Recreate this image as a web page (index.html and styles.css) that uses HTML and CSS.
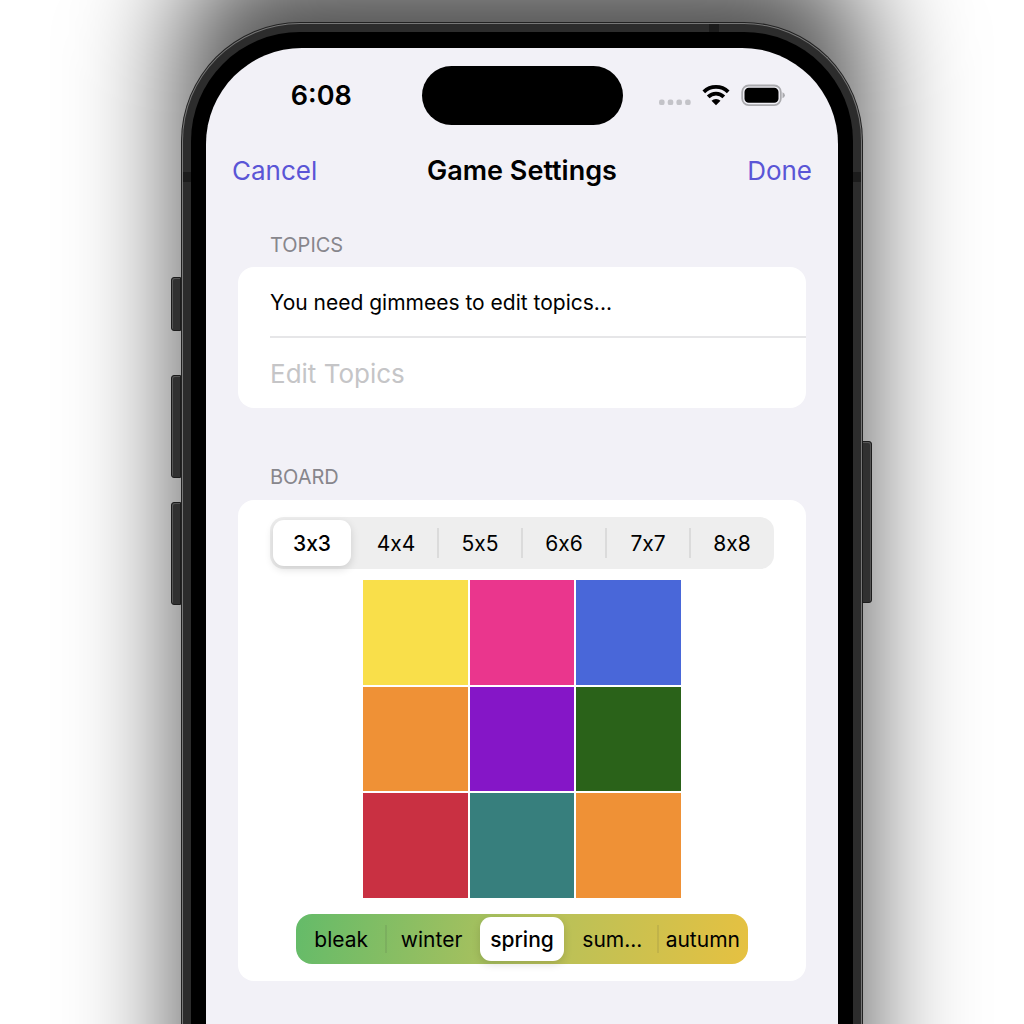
FILE: index.html
```html
<!DOCTYPE html>
<html lang="en">
<head>
<meta charset="utf-8">
<meta name="viewport" content="width=device-width, initial-scale=1">
<title>Game Settings</title>
<link rel="stylesheet" href="styles.css">
</head>
<body>
<div class="stage">
  <div class="phone">
    <span class="side-key key-action"></span>
    <span class="side-key key-up"></span>
    <span class="side-key key-down"></span>
    <span class="side-key key-power"></span>
    <div class="band">
      <span class="antenna antenna-top"></span>
      <span class="antenna antenna-left"></span>
      <span class="antenna antenna-right"></span>
      <div class="bezel">
        <div class="screen">
          <div class="status">
            <time class="clock">6:08</time>
            <div class="island"></div>
            <div class="indicators">
              <svg width="128" height="26" viewBox="0 0 128 26" aria-hidden="true">
                <g fill="#c3c3c8">
                  <rect x="0" y="16.500" width="5.600" height="5.600" rx="2.200"/>
                  <rect x="8.700" y="16.500" width="5.600" height="5.600" rx="2.200"/>
                  <rect x="17.400" y="16.500" width="5.600" height="5.600" rx="2.200"/>
                  <rect x="26.100" y="16.500" width="5.600" height="5.600" rx="2.200"/>
                </g>
                <g fill="none" stroke="#000" stroke-width="3.800">
                  <path d="M44.800 8.800A17.500 17.500 0 0 1 69.200 8.800"/>
                  <path d="M49.200 13.800A11 11 0 0 1 64.800 13.800"/>
                </g>
                <path d="M57 22.300L52.500 17.800A6.400 6.400 0 0 1 61.500 17.800Z"/>
                <rect x="83.200" y="2.500" width="38.600" height="19.600" rx="6.500" fill="none" stroke="#aaaaae" stroke-width="1.800"/>
                <rect x="85.500" y="4.800" width="34" height="15" rx="4.300"/>
                <path d="M123.500 9.300Q125.900 10.300 125.900 12.300T123.500 15.300Z" fill="#aaaaae"/>
              </svg>
            </div>
          </div>
          <header class="navbar">
            <button class="nav-button" type="button">Cancel</button>
            <h1 class="title">Game Settings</h1>
            <button class="nav-button nav-done" type="button">Done</button>
          </header>
          <main class="settings">
            <section class="group">
              <h2 class="group-title">TOPICS</h2>
              <div class="card">
                <p class="row note">You need gimmees to edit topics...</p>
                <button class="row edit" type="button" disabled>Edit Topics</button>
              </div>
            </section>
            <section class="group">
              <h2 class="group-title">BOARD</h2>
              <div class="card board-card">
                <div class="segments sizes" role="radiogroup" aria-label="Board size">
                  <label class="segment"><input type="radio" name="size" checked><span>3x3</span></label>
                  <label class="segment"><input type="radio" name="size"><span>4x4</span></label>
                  <label class="segment"><input type="radio" name="size"><span>5x5</span></label>
                  <label class="segment"><input type="radio" name="size"><span>6x6</span></label>
                  <label class="segment"><input type="radio" name="size"><span>7x7</span></label>
                  <label class="segment"><input type="radio" name="size"><span>8x8</span></label>
                </div>
                <div class="board">
                  <div class="tile yellow"></div>
                  <div class="tile pink"></div>
                  <div class="tile blue"></div>
                  <div class="tile orange"></div>
                  <div class="tile purple"></div>
                  <div class="tile green"></div>
                  <div class="tile red"></div>
                  <div class="tile teal"></div>
                  <div class="tile orange"></div>
                </div>
                <div class="segments themes" role="radiogroup" aria-label="Color theme">
                  <label class="segment"><input type="radio" name="theme"><span>bleak</span></label>
                  <label class="segment"><input type="radio" name="theme"><span>winter</span></label>
                  <label class="segment"><input type="radio" name="theme" checked><span>spring</span></label>
                  <label class="segment"><input type="radio" name="theme"><span>sum...</span></label>
                  <label class="segment"><input type="radio" name="theme"><span>autumn</span></label>
                </div>
              </div>
            </section>
          </main>
        </div>
      </div>
    </div>
  </div>
</div>
</body>
</html>
```
FILE: styles.css
```css
* {
  box-sizing: border-box;
}

body {
  margin: 0;
  background: #fff;
  font-family: Inter, "Liberation Sans", sans-serif;
  color: #000;
}

.stage {
  display: flex;
  min-height: 100vh;
  padding: 22px 161px 0 181px;
  overflow: hidden;
  isolation: isolate;
}

.phone {
  position: relative;
  display: flex;
  flex: 1;
  min-width: 0;
  padding: 1px 1px 0;
  border-radius: 119px 119px 0 0;
  background: #222;
}

/* soft shadow that runs past the top and bottom of the window */
.phone::before {
  content: "";
  position: absolute;
  z-index: -1;
  inset: -64px 0 -300px;
  border-radius: 80px;
  background: rgba(0, 0, 0, 0.7);
  filter: blur(56px);
}

.band {
  position: relative;
  display: flex;
  flex: 1;
  min-width: 0;
  padding: 8px 8px 0;
  border: 1px solid #777;
  border-bottom: 0;
  border-radius: 118px 118px 0 0;
  background: #2c2c2c;
}

.bezel {
  display: flex;
  flex: 1;
  min-width: 0;
  padding: 16px 15px 0;
  border-radius: 109px 109px 0 0;
  background: #000;
}

.screen {
  flex: 1;
  min-width: 0;
  border-radius: 96px 96px 0 0;
  background: #f2f1f7;
}

.side-key {
  position: absolute;
  left: -10px;
  width: 10px;
  border: 1px solid #1c1c1c;
  border-radius: 3px 0 0 3px;
  background: #303030;
  box-shadow: inset 1px 1px 0 #555;
}

.key-action {
  top: 255px;
  height: 54px;
}

.key-up {
  top: 353px;
  height: 103px;
}

.key-down {
  top: 480px;
  height: 103px;
}

.key-power {
  top: 419px;
  right: -9px;
  left: auto;
  height: 162px;
  border-radius: 0 3px 3px 0;
  box-shadow: inset -1px 1px 0 #555;
}

.antenna {
  position: absolute;
  background: #1c1c1c;
}

.antenna-top {
  top: 0;
  right: 142px;
  width: 10px;
  height: 8px;
}

.antenna-left,
.antenna-right {
  top: 148px;
  width: 8px;
  height: 10px;
}

.antenna-left {
  left: 0;
}

.antenna-right {
  right: 0;
}

.status {
  display: grid;
  grid-template-columns: 1fr 201px 1fr;
  align-items: center;
  padding: 18px 0 0;
}

.clock {
  padding-left: 15px;
  font-size: 27px;
  font-weight: 600;
  line-height: 32px;
  text-align: center;
}

.island {
  height: 59px;
  border-radius: 30px;
  background: #000;
}

.indicators {
  display: flex;
  justify-content: flex-end;
  padding-right: 51px;
}

.navbar {
  display: grid;
  grid-template-columns: 1fr auto 1fr;
  align-items: center;
  height: 92px;
  padding: 0 26px;
}

.nav-button {
  padding: 0;
  border: 0;
  background: none;
  color: #5a55d6;
  font: inherit;
  font-size: 26px;
  line-height: 32px;
  text-align: left;
}

.nav-done {
  text-align: right;
}

.title {
  margin: 0;
  font-size: 27px;
  font-weight: 600;
  line-height: 32px;
}

.settings {
  display: flex;
  flex-direction: column;
  gap: 56px;
  padding: 15px 32px 43px;
}

.group-title {
  margin: 0;
  padding: 0 32px 9px;
  color: #87868c;
  font-size: 20px;
  font-weight: 400;
  line-height: 26px;
}

.card {
  border-radius: 16px;
  background: #fff;
}

.row {
  display: block;
  height: 70px;
  margin: 0 0 0 32px;
  line-height: 72px;
}

.note {
  height: 71px;
  border-bottom: 2px solid #e6e6e8;
  font-size: 21px;
}

.edit {
  padding: 0;
  border: 0;
  background: none;
  color: #c5c5c7;
  font-family: inherit;
  font-size: 26px;
}

.group + .group .group-title {
  padding-bottom: 10px;
}

.board-card {
  display: flex;
  flex-direction: column;
  align-items: center;
  padding: 17px 32px;
}

/* contextual alternates would turn the x between digits into a multiply sign */
.segments {
  display: grid;
  border-radius: 14px;
  font-size: 21px;
  font-feature-settings: "calt" 0;
}

.sizes {
  grid-template-columns: repeat(6, 1fr);
  width: 100%;
  height: 52px;
  background: #eee;
}

.themes {
  grid-template-columns: repeat(5, 1fr);
  width: 452px;
  max-width: 100%;
  height: 50px;
  border-radius: 16px;
  background: linear-gradient(100deg, #64bb69, #b2c15c 50%, #e6c141);
}

.segment {
  position: relative;
  display: flex;
  min-width: 0;
  padding: 3px;
}

.segment span {
  display: flex;
  flex: 1;
  align-items: center;
  justify-content: center;
  min-width: 0;
  border-radius: 11px;
}

.segment input {
  position: absolute;
  width: 1px;
  height: 1px;
  margin: 0;
  opacity: 0;
}

.segment + .segment::before {
  content: "";
  position: absolute;
  top: 11px;
  bottom: 11px;
  left: -1px;
  width: 2px;
  background: rgba(60, 60, 60, 0.1);
}

.segment:has(:checked)::before,
.segment:has(:checked) + .segment::before {
  display: none;
}

.segment input:checked + span {
  background: #fff;
  box-shadow: 0 3px 8px rgba(0, 0, 0, 0.14);
  font-weight: 500;
}

.board {
  display: grid;
  grid-template-columns: repeat(3, 1fr);
  gap: 2px;
  width: 318px;
  max-width: 100%;
  margin: 11px 0 16px;
}

.tile {
  aspect-ratio: 1;
}

.yellow { background: #f9df4a; }
.pink { background: #ea368d; }
.blue { background: #4967d9; }
.orange { background: #ef9136; }
.purple { background: #8516c7; }
.green { background: #2a6219; }
.red { background: #c93042; }
.teal { background: #377f7d; }
```
